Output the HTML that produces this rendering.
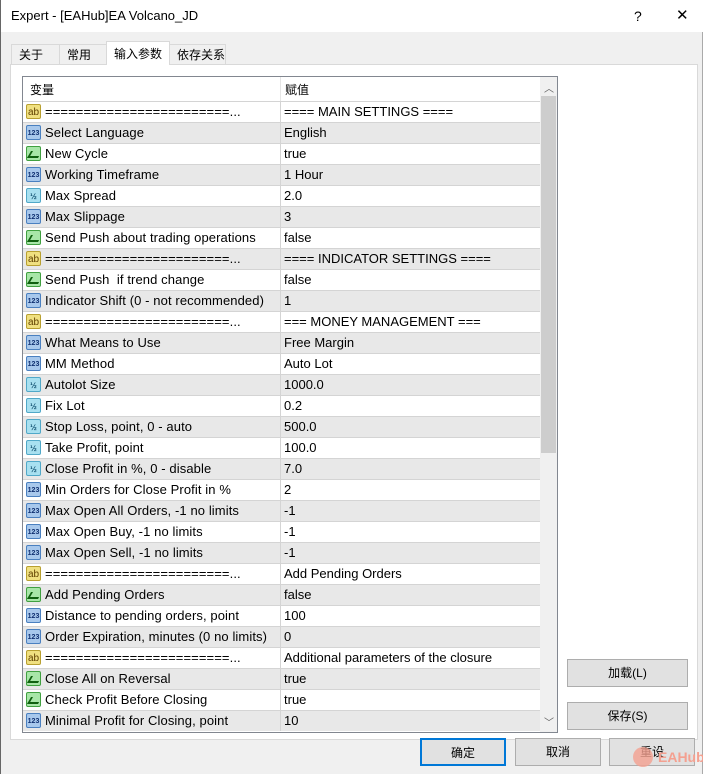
<!DOCTYPE html>
<html><head><meta charset="utf-8"><style>
*{box-sizing:border-box;margin:0;padding:0}
body{width:703px;height:774px;background:#f0f0f0;font-family:"Liberation Sans","Noto Sans CJK SC",sans-serif;font-size:13px;color:#000;position:relative;overflow:hidden}
.win{position:absolute;left:0;top:0;width:703px;height:774px;border-left:1px solid #666;border-right:1px solid #aaa}
.title{position:absolute;left:0;top:0;width:703px;height:32px;background:#fff}
.title span{position:absolute;top:8px;font-size:13px}
.tab{position:absolute;top:44px;height:21px;border:1px solid #d9d9d9;border-bottom:none;background:#f0f0f0;font-size:12px;padding:1px 0 0 7px}
.tab.act{top:41px;height:24px;background:#fff;border-color:#d9d9d9;z-index:3;padding-top:3px}
.panel{position:absolute;left:9px;top:64px;width:688px;height:676px;background:#fff;border:1px solid #d9d9d9}
.list{position:absolute;left:21px;top:76px;width:536px;height:657px;border:1px solid #828790;background:#fff;overflow:hidden}
.hdr{position:absolute;left:0;top:0;height:24px;width:517px;font-size:12px}
.hdr span{position:absolute;top:4px}
.row{position:absolute;left:0;width:517px;height:21px;border-top:1px solid #d4d4d4}
.row.g{background:#e8e8e8}
.row .n{position:absolute;left:22px;top:2px;white-space:nowrap;letter-spacing:0.1px}
.row .v{position:absolute;left:261px;top:2px;white-space:nowrap}
.row .d{position:absolute;left:257px;top:-1px;width:1px;height:21px;background:#d4d4d4}
.ic{position:absolute;left:3px;top:2px;width:15px;height:15px;border-radius:2px;font-size:8px;line-height:15px;text-align:center;font-weight:bold}
.ab{background:#f0e080;border:1px solid #b8a030;color:#604000;font-size:10px;font-weight:normal}
.n1{background:#a8c8ec;border:1px solid #4a80c0;color:#103070;font-size:7px}
.h{background:#a8e0f0;border:1px solid #50a8c8;color:#105070;font-size:8px}
.gr{background:#a8e6a8;border:1px solid #40a040}
.gr:after{content:"";position:absolute;left:2px;top:4px;width:9px;height:5px;border-left:2px solid #106010;border-bottom:2px solid #106010;transform:skewX(-30deg)}
.sb{position:absolute;left:517px;top:0;width:17px;height:655px;background:#f0f0f0}
.thumb{position:absolute;left:1px;top:19px;width:15px;height:357px;background:#cdcdcd}
.btn{position:absolute;height:28px;border:1px solid #adadad;background:#e1e1e1;font-size:12px;text-align:center;line-height:26px}
</style></head><body><div class="win">
<div class="title"><span style="left:10px">Expert - [EAHub]EA Volcano_JD</span><span style="left:633px;font-size:14px">?</span><span style="left:675px;font-size:15px;top:6px">✕</span></div>
<div class="tab" style="left:10px;width:49px">关于</div>
<div class="tab" style="left:58px;width:48px">常用</div>
<div class="tab act" style="left:105px;width:64px">输入参数</div>
<div class="tab" style="left:168px;width:57px">依存关系</div>
<div class="panel"></div>
<div class="list">
<div class="hdr"><span style="left:7px">变量</span><span style="left:262px">赋值</span><div style="position:absolute;left:257px;top:0;width:1px;height:24px;background:#e5e5e5"></div></div>
<div id="rows"></div>
<div class="sb"><div style="position:absolute;left:4px;top:3px;font-size:10px;color:#606060">︿</div><div class="thumb"></div><div style="position:absolute;left:4px;top:637px;font-size:10px;color:#606060">﹀</div></div>
</div>
<div class="btn" style="left:566px;top:659px;width:121px">加载(L)</div>
<div class="btn" style="left:566px;top:702px;width:121px">保存(S)</div>
<div class="btn" style="left:419px;top:738px;width:86px;border:2px solid #0078d7">确定</div>
<div class="btn" style="left:514px;top:738px;width:86px">取消</div>
<div class="btn" style="left:608px;top:738px;width:86px">重设</div>
<div style="position:absolute;left:632px;top:747px;width:20px;height:20px;border-radius:50%;background:#f4a090;opacity:.8"></div>
<div style="position:absolute;left:657px;top:749px;color:#f4a090;font-weight:bold;font-size:14px">EAHub</div>
</div>
<script>
var d=[["ab","========================...","==== MAIN SETTINGS ===="],["n1","Select Language","English"],["gr","New Cycle","true"],["n1","Working Timeframe","1 Hour"],["h","Max Spread","2.0"],["n1","Max Slippage","3"],["gr","Send Push about trading operations","false"],["ab","========================...","==== INDICATOR SETTINGS ===="],["gr","Send Push &nbsp;if trend change","false"],["n1","Indicator Shift (0 - not recommended)","1"],["ab","========================...","=== MONEY MANAGEMENT ==="],["n1","What Means to Use","Free Margin"],["n1","MM Method","Auto Lot"],["h","Autolot Size","1000.0"],["h","Fix Lot","0.2"],["h","Stop Loss, point, 0 - auto","500.0"],["h","Take Profit, point","100.0"],["h","Close Profit in %, 0 - disable","7.0"],["n1","Min Orders for Close Profit in %","2"],["n1","Max Open All Orders, -1 no limits","-1"],["n1","Max Open Buy, -1 no limits","-1"],["n1","Max Open Sell, -1 no limits","-1"],["ab","========================...","Add Pending Orders"],["gr","Add Pending Orders","false"],["n1","Distance to pending orders, point","100"],["n1","Order Expiration, minutes (0 no limits)","0"],["ab","========================...","Additional parameters of the closure"],["gr","Close All on Reversal","true"],["gr","Check Profit Before Closing","true"],["n1","Minimal Profit for Closing, point","10"]];
var h="";d.forEach(function(r,i){var t={ab:"ab",n1:"123",h:"½",gr:""}[r[0]];
h+='<div class="row'+(i%2?' g':'')+'" style="top:'+(24+i*21)+'px"><div class="ic '+r[0]+'">'+t+'</div><span class="n">'+r[1]+'</span><div class="d"></div><span class="v">'+r[2]+'</span></div>';});
document.getElementById("rows").innerHTML=h;
</script>
</body></html>
